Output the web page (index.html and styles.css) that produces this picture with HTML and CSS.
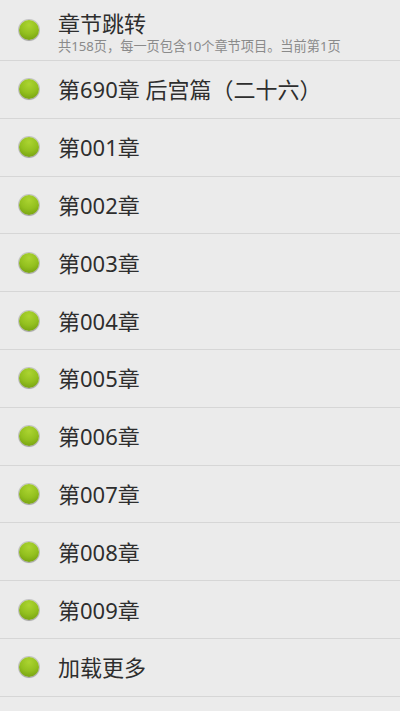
FILE: index.html
```html
<!DOCTYPE html>
<html>
<head>
  <meta charset="UTF-8">
  <meta name="viewport" content="width=device-width, initial-scale=1.0">
  <title>章节列表</title>
  <link rel="stylesheet" href="styles.css">
</head>
<body>

<ul class="chapter-list">
  <li class="chapter chapter--head">
    <span class="chapter__dot"></span>
    <div class="chapter__body">
      <div class="chapter__title">章节跳转</div>
      <div class="chapter__sub">共158页，每一页包含10个章节项目。当前第1页</div>
    </div>
  </li>
  <li class="chapter"><span class="chapter__dot"></span><div class="chapter__title">第690章 后宫篇（二十六）</div></li>
  <li class="chapter"><span class="chapter__dot"></span><div class="chapter__title">第001章</div></li>
  <li class="chapter"><span class="chapter__dot"></span><div class="chapter__title">第002章</div></li>
  <li class="chapter"><span class="chapter__dot"></span><div class="chapter__title">第003章</div></li>
  <li class="chapter"><span class="chapter__dot"></span><div class="chapter__title">第004章</div></li>
  <li class="chapter"><span class="chapter__dot"></span><div class="chapter__title">第005章</div></li>
  <li class="chapter"><span class="chapter__dot"></span><div class="chapter__title">第006章</div></li>
  <li class="chapter"><span class="chapter__dot"></span><div class="chapter__title">第007章</div></li>
  <li class="chapter"><span class="chapter__dot"></span><div class="chapter__title">第008章</div></li>
  <li class="chapter"><span class="chapter__dot"></span><div class="chapter__title">第009章</div></li>
  <li class="chapter"><span class="chapter__dot"></span><div class="chapter__title">加载更多</div></li>
</ul>

</body>
</html>
```

FILE: styles.css
```css
html, body {
  margin: 0;
  padding: 0;
}
*, *:before, *:after {
  box-sizing: border-box;
}
body {
  background-color: #ebebeb;
  font-family: "Noto Sans", "Noto Sans CJK SC", sans-serif;
  color: #2e2e2e;
  height: 711px;
  overflow: hidden;
}
.chapter-list {
  list-style: none;
  margin: 0;
  padding: 0;
}
.chapter {
  display: flex;
  align-items: center;
  height: 57.8px;
  border-bottom: 1.5px solid #d6d6d6;
  padding-left: 19px;
}
.chapter--head {
  height: 61px;
}
.chapter__dot {
  flex: none;
  width: 20px;
  height: 20px;
  border-radius: 50%;
  background: radial-gradient(circle at 50% 25%, #acd431 0%, #93c01f 50%, #6c960c 100%);
  box-shadow: 0 0 0 1px rgba(120, 120, 120, 0.35), 0 1px 1px rgba(0, 0, 0, 0.2);
  margin-right: 19px;
}
.chapter__body {
  display: flex;
  flex-direction: column;
  gap: 2px;
  margin-top: 3px;
}
.chapter__title {
  font-size: 22px;
  line-height: 26px;
}
.chapter__sub {
  font-size: 13.2px;
  line-height: 16px;
  color: #8a8a8a;
}
```
